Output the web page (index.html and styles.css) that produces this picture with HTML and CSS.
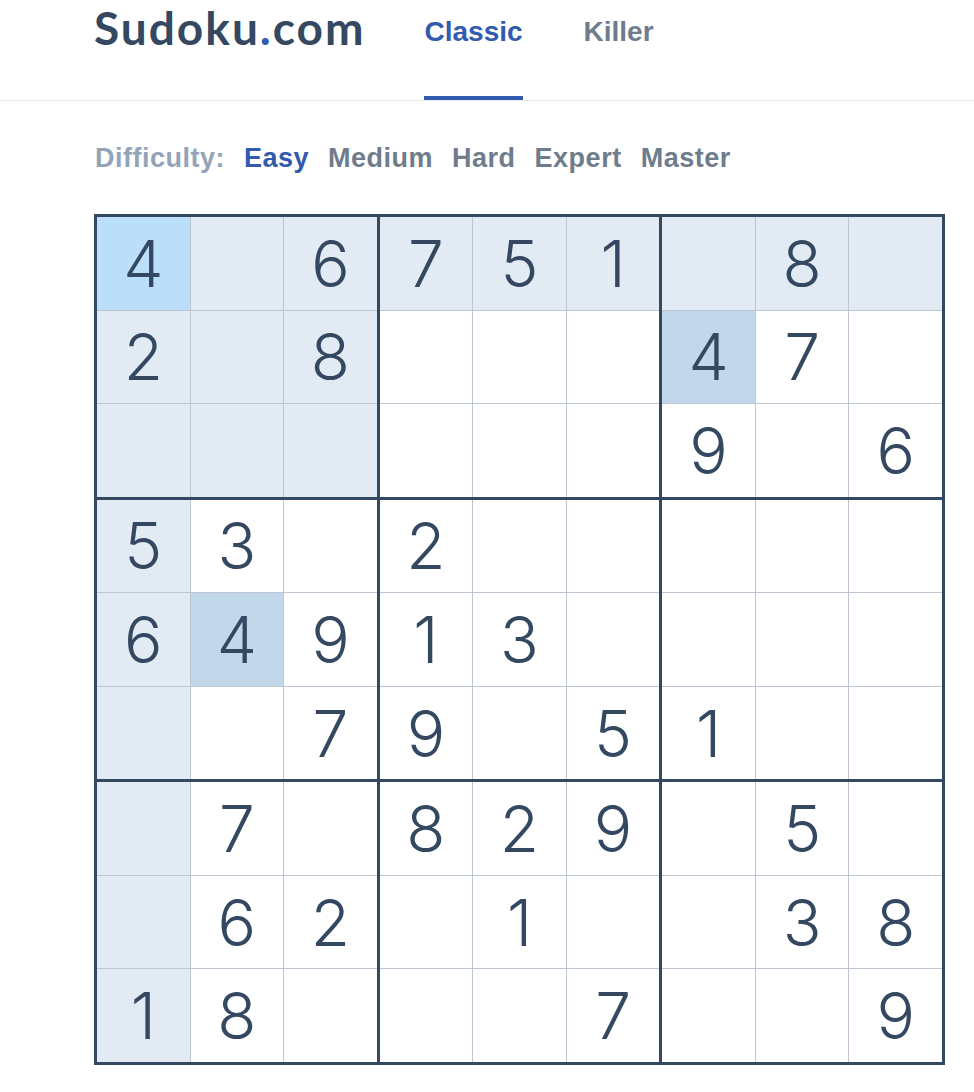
FILE: index.html
```html
<!DOCTYPE html>
<html lang="en">
<head>
<meta charset="utf-8">
<title>Sudoku.com</title>
<link rel="stylesheet" href="styles.css">
</head>
<body>
<header class="header">
  <div class="logo">Sudoku<span class="dot">.</span>com</div>
  <nav class="tabs">
    <a class="tab active">Classic</a>
    <a class="tab">Killer</a>
  </nav>
</header>
<main class="main">
  <div class="difficulty">
    <span class="label">Difficulty:</span>
    <a class="level active">Easy</a>
    <a class="level">Medium</a>
    <a class="level">Hard</a>
    <a class="level">Expert</a>
    <a class="level">Master</a>
  </div>
  <div class="board">
    <div class="box">
      <div class="cell sel">4</div><div class="cell hl"></div><div class="cell hl">6</div>
      <div class="cell hl">2</div><div class="cell hl"></div><div class="cell hl">8</div>
      <div class="cell hl"></div><div class="cell hl"></div><div class="cell hl"></div>
    </div>
    <div class="box">
      <div class="cell hl">7</div><div class="cell hl">5</div><div class="cell hl">1</div>
      <div class="cell"></div><div class="cell"></div><div class="cell"></div>
      <div class="cell"></div><div class="cell"></div><div class="cell"></div>
    </div>
    <div class="box">
      <div class="cell hl"></div><div class="cell hl">8</div><div class="cell hl"></div>
      <div class="cell same">4</div><div class="cell">7</div><div class="cell"></div>
      <div class="cell">9</div><div class="cell"></div><div class="cell">6</div>
    </div>
    <div class="box">
      <div class="cell hl">5</div><div class="cell">3</div><div class="cell"></div>
      <div class="cell hl">6</div><div class="cell same">4</div><div class="cell">9</div>
      <div class="cell hl"></div><div class="cell"></div><div class="cell">7</div>
    </div>
    <div class="box">
      <div class="cell">2</div><div class="cell"></div><div class="cell"></div>
      <div class="cell">1</div><div class="cell">3</div><div class="cell"></div>
      <div class="cell">9</div><div class="cell"></div><div class="cell">5</div>
    </div>
    <div class="box">
      <div class="cell"></div><div class="cell"></div><div class="cell"></div>
      <div class="cell"></div><div class="cell"></div><div class="cell"></div>
      <div class="cell">1</div><div class="cell"></div><div class="cell"></div>
    </div>
    <div class="box">
      <div class="cell hl"></div><div class="cell">7</div><div class="cell"></div>
      <div class="cell hl"></div><div class="cell">6</div><div class="cell">2</div>
      <div class="cell hl">1</div><div class="cell">8</div><div class="cell"></div>
    </div>
    <div class="box">
      <div class="cell">8</div><div class="cell">2</div><div class="cell">9</div>
      <div class="cell"></div><div class="cell">1</div><div class="cell"></div>
      <div class="cell"></div><div class="cell"></div><div class="cell">7</div>
    </div>
    <div class="box">
      <div class="cell"></div><div class="cell">5</div><div class="cell"></div>
      <div class="cell"></div><div class="cell">3</div><div class="cell">8</div>
      <div class="cell"></div><div class="cell"></div><div class="cell">9</div>
    </div>
  </div>
</main>
</body>
</html>
```
FILE: styles.css
```css
* { box-sizing: border-box; }
html, body { margin: 0; padding: 0; background: #fff; }
body { font-family: "Liberation Sans", Arial, sans-serif; color: #344861; }

.header {
  display: flex;
  height: 101px;
  padding-left: 94px;
  border-bottom: 1px solid #e4e7ee;
}
.logo {
  font-family: Lato, "Liberation Sans", sans-serif;
  font-weight: 700;
  font-size: 46px;
  line-height: 46px;
  padding-top: 5px;
  color: #344861;
  letter-spacing: 2px;
}
.logo .dot { color: #325aaf; }

.tabs {
  display: flex;
  gap: 61px;
  margin-left: 59px;
  height: 100px;
}
.tab {
  display: block;
  height: 100px;
  padding-top: 18px;
  font-size: 28px;
  line-height: 28px;
  font-weight: 700;
  color: #6e7c8c;
}
.tab.active {
  color: #325aaf;
  border-bottom: 4px solid #325aaf;
}

.main { padding: 44px 0 0 94px; }

.difficulty {
  display: flex;
  gap: 19px;
  font-size: 27px;
  line-height: 26px;
  font-weight: 700;
  color: #6e7c8c;
  padding-left: 1px;
  letter-spacing: 0.5px;
}
.difficulty .label { color: #94a3b7; }
.difficulty .level.active { color: #325aaf; }

.board {
  margin-top: 43px;
  width: 851px;
  height: 851px;
  display: grid;
  grid-template-columns: repeat(3, 1fr);
  grid-template-rows: repeat(3, 1fr);
  gap: 3px;
  background: #344861;
  border: 3px solid #344861;
}
.box {
  display: grid;
  grid-template-columns: repeat(3, 1fr);
  grid-template-rows: repeat(3, 1fr);
  gap: 1px;
  background: #bec6d4;
}
.cell {
  background: #fff;
  display: flex;
  align-items: center;
  justify-content: center;
  font-family: Inter, "Noto Sans", sans-serif;
  font-weight: 300;
  font-size: 64px;
  color: #344861;
}
.cell.hl { background: #e2ebf3; }
.cell.sel { background: #bbdefb; }
.cell.same { background: #c3d7ea; }
```
